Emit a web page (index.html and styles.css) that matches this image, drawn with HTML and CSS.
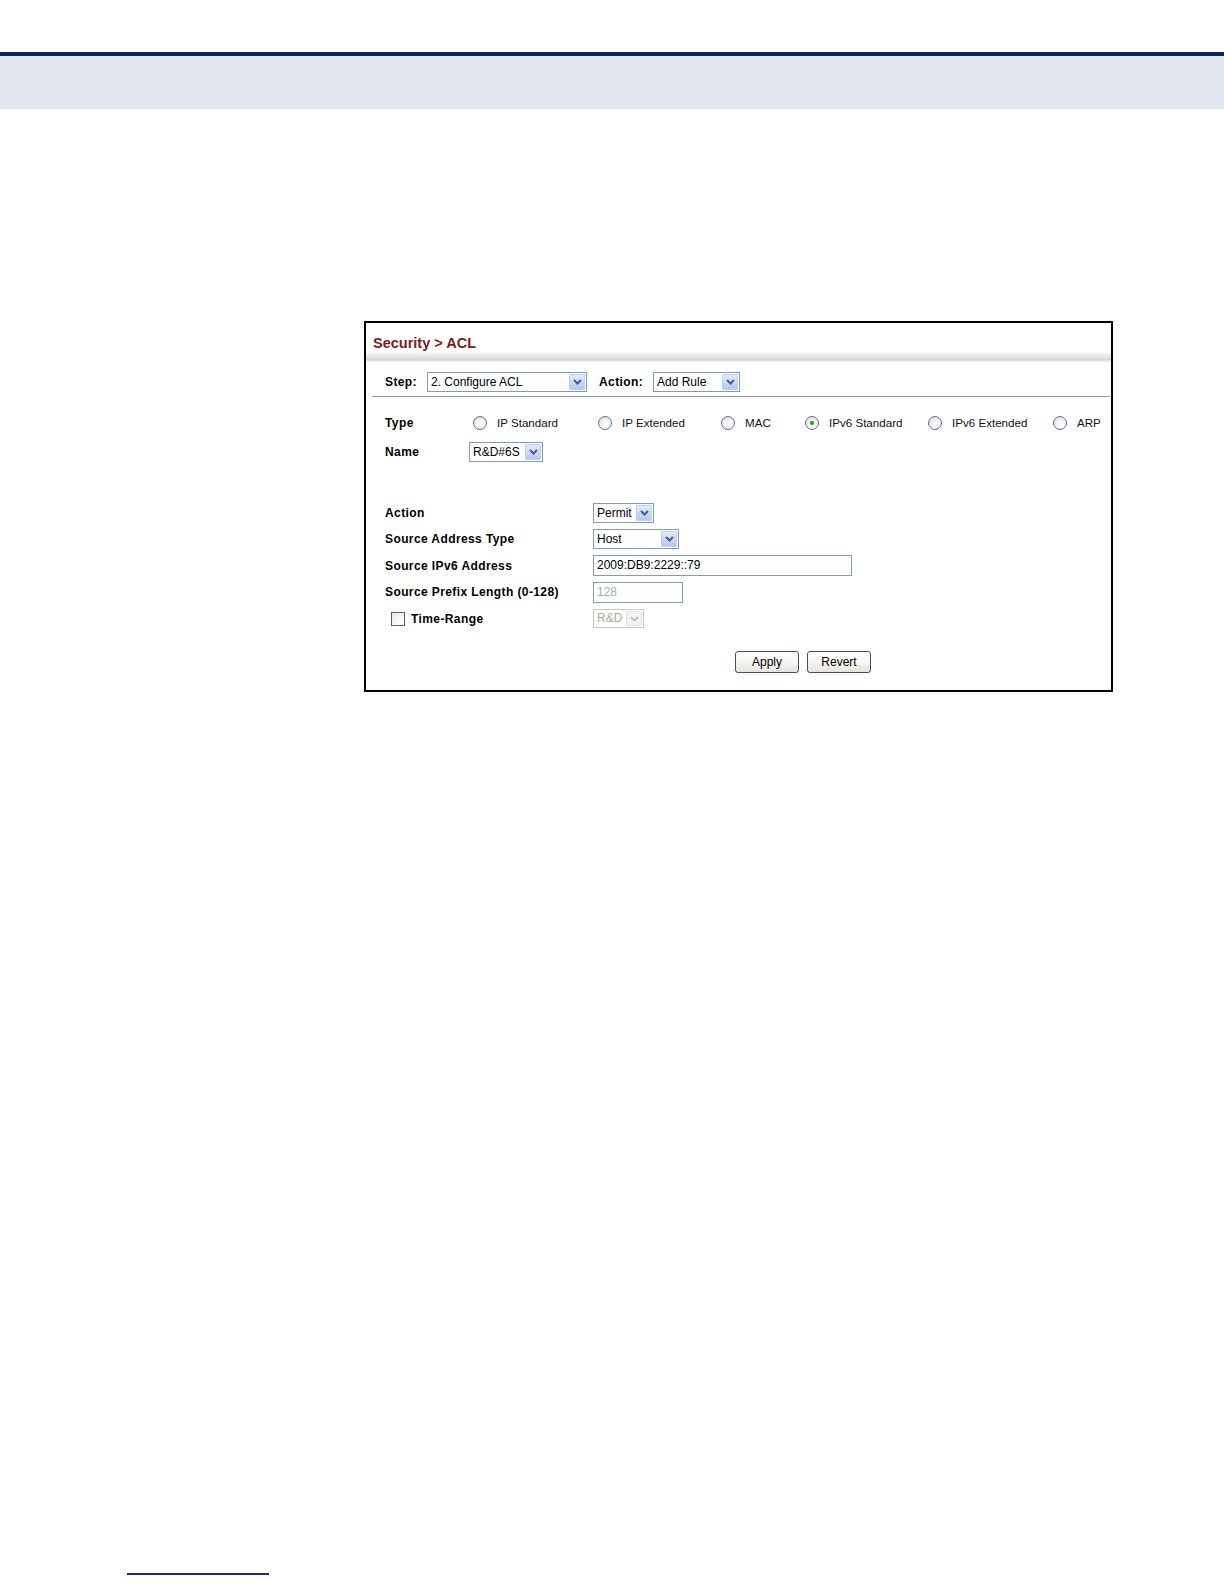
FILE: index.html
```html
<!DOCTYPE html>
<html>
<head>
<meta charset="utf-8">
<title>Security &gt; ACL</title>
<link rel="stylesheet" href="styles.css">
</head>
<body>
<div class="topline"></div>
<div class="band"></div>

<div class="panel">
  <div class="title">Security &gt; ACL</div>
  <div class="grad"></div>

  <div class="step-row">
    <span class="lbl step-lbl">Step:</span>
    <div class="sel w-step"><span class="sel-text">2. Configure ACL</span><span class="sel-btn"><svg width="9" height="6" viewBox="0 0 9 6"><path d="M1 1 L4.5 4.5 L8 1" fill="none" stroke="#4a5f86" stroke-width="2"/></svg></span></div>
    <span class="lbl act-lbl">Action:</span>
    <div class="sel w-act"><span class="sel-text">Add Rule</span><span class="sel-btn"><svg width="9" height="6" viewBox="0 0 9 6"><path d="M1 1 L4.5 4.5 L8 1" fill="none" stroke="#4a5f86" stroke-width="2"/></svg></span></div>
  </div>
  <div class="rule"></div>

  <div class="type-row">
    <span class="lbl type-lbl">Type</span>
    <label class="opt w1"><span class="radio"></span><span class="opt-text">IP Standard</span></label>
    <label class="opt w2"><span class="radio"></span><span class="opt-text">IP Extended</span></label>
    <label class="opt w3"><span class="radio"></span><span class="opt-text">MAC</span></label>
    <label class="opt w4"><span class="radio checked"></span><span class="opt-text">IPv6 Standard</span></label>
    <label class="opt w5"><span class="radio"></span><span class="opt-text">IPv6 Extended</span></label>
    <label class="opt"><span class="radio"></span><span class="opt-text">ARP</span></label>
  </div>

  <div class="name-row">
    <span class="lbl name-lbl">Name</span>
    <div class="sel w-name"><span class="sel-text">R&amp;D#6S</span><span class="sel-btn"><svg width="9" height="6" viewBox="0 0 9 6"><path d="M1 1 L4.5 4.5 L8 1" fill="none" stroke="#4a5f86" stroke-width="2"/></svg></span></div>
  </div>

  <div class="form-grid">
    <span class="lbl">Action</span>
    <div class="ctl"><div class="sel w-permit"><span class="sel-text">Permit</span><span class="sel-btn"><svg width="9" height="6" viewBox="0 0 9 6"><path d="M1 1 L4.5 4.5 L8 1" fill="none" stroke="#4a5f86" stroke-width="2"/></svg></span></div></div>

    <span class="lbl">Source Address Type</span>
    <div class="ctl"><div class="sel w-host"><span class="sel-text">Host</span><span class="sel-btn"><svg width="9" height="6" viewBox="0 0 9 6"><path d="M1 1 L4.5 4.5 L8 1" fill="none" stroke="#4a5f86" stroke-width="2"/></svg></span></div></div>

    <span class="lbl">Source IPv6 Address</span>
    <div class="ctl"><div class="inp w-ipv6">2009:DB9:2229::79</div></div>

    <span class="lbl">Source Prefix Length (0-128)</span>
    <div class="ctl"><div class="inp w-prefix disabled">128</div></div>

    <span class="lbl time-lbl"><span class="check"></span>Time-Range</span>
    <div class="ctl"><div class="sel w-rd dis"><span class="sel-text">R&amp;D</span><span class="sel-btn"><svg width="9" height="6" viewBox="0 0 9 6"><path d="M1 1 L4.5 4.5 L8 1" fill="none" stroke="#c4c4c4" stroke-width="2"/></svg></span></div></div>
  </div>

  <div class="buttons">
    <button class="btn">Apply</button>
    <button class="btn">Revert</button>
  </div>
</div>

<div class="footline"></div>
</body>
</html>
```
FILE: styles.css
```css
html, body {
  margin: 0;
  padding: 0;
  background: #ffffff;
  font-family: "Liberation Sans", Arial, sans-serif;
  color: #000;
}

.topline {
  margin-top: 52px;
  height: 4px;
  background: #0b2462;
}

.band {
  height: 53px;
  background: #e4e7ef;
}

.panel {
  margin-top: 212px;
  margin-left: 364px;
  width: 749px;
  box-sizing: border-box;
  border: 2px solid #000;
  padding-bottom: 17px;
}

.title {
  height: 29px;
  box-sizing: border-box;
  padding: 12px 0 0 7px;
  line-height: 17px;
  font-size: 14.5px;
  font-weight: bold;
  color: #7a1d1d;
}

.grad {
  height: 10px;
  background: linear-gradient(to bottom, #fbfbfb 0%, #e2e2e2 55%, #d9d9d9 75%, #f2f2f2 100%);
}

.lbl {
  font-size: 12px;
  font-weight: bold;
  letter-spacing: 0.4px;
  line-height: 20px;
  white-space: nowrap;
}

.step-row {
  display: flex;
  align-items: center;
  padding: 10px 0 4px 19px;
}

.step-lbl { width: 42px; }
.act-lbl { width: 54px; margin-left: 12px; }

.rule {
  margin-left: 6px;
  height: 1px;
  background: #9a9a9a;
}

.sel {
  height: 20px;
  box-sizing: border-box;
  border: 1px solid #7f9db9;
  background: #fff;
  display: flex;
  align-items: stretch;
  font-size: 12px;
}

.sel-text {
  flex: 1;
  padding-left: 3px;
  line-height: 18px;
  white-space: nowrap;
  overflow: hidden;
}

.sel-btn {
  width: 16px;
  margin: 1px;
  box-sizing: border-box;
  border: 1px solid #bdd0f4;
  border-radius: 1px;
  background: linear-gradient(to bottom, #e3ebfd 0%, #c5d6f8 60%, #b6c9f2 100%);
  display: flex;
  align-items: center;
  justify-content: center;
  flex: none;
}

.sel.dis {
  border-color: #c9c7ba;
  color: #aca899;
  height: 19px;
}
.sel.dis .sel-text { line-height: 17px; }
.sel.dis .sel-btn {
  background: #f4f4f0;
  border-color: #e0e0da;
}

.w-step { width: 160px; }
.w-act { width: 87px; }
.w-name { width: 74px; }
.w-permit { width: 61px; }
.w-host { width: 86px; }
.w-rd { width: 51px; }

.type-row {
  display: flex;
  align-items: center;
  margin-top: 16px;
  padding-left: 19px;
  height: 20px;
}

.type-lbl { width: 88px; }

.opt {
  display: flex;
  align-items: center;
  gap: 10px;
  font-size: 11.6px;
}
.w1 { width: 125px; }
.w2 { width: 123px; }
.w3 { width: 84px; }
.w4 { width: 123px; }
.w5 { width: 125px; }

.opt-text {
  line-height: 20px;
  color: #111;
}

.radio {
  width: 14px;
  height: 14px;
  box-sizing: border-box;
  border-radius: 50%;
  border: 1px solid #5f7189;
  background: radial-gradient(circle at 60% 65%, #ffffff 0%, #f2f2f2 45%, #d4d4d4 100%);
  display: flex;
  align-items: center;
  justify-content: center;
  flex: none;
}

.radio.checked::after {
  content: "";
  width: 4px;
  height: 4px;
  border-radius: 50%;
  background: #27a12a;
  box-shadow: 0 0 1px #5dc45f;
}

.name-row {
  display: flex;
  align-items: center;
  margin-top: 9px;
  padding-left: 19px;
  height: 20px;
}

.name-lbl { width: 84px; }

.form-grid {
  margin-top: 40px;
  padding-left: 19px;
  display: grid;
  grid-template-columns: 208px 1fr;
  grid-auto-rows: 21px;
  row-gap: 5.5px;
  align-items: center;
}

.ctl {
  display: flex;
  align-items: center;
}

.inp {
  height: 21px;
  box-sizing: border-box;
  border: 1px solid #7f9db9;
  font-size: 12px;
  line-height: 19px;
  padding-left: 3px;
  white-space: nowrap;
}

.inp.disabled { color: #ababab; }

.w-ipv6 { width: 259px; }
.w-prefix { width: 90px; }

.time-lbl {
  display: flex;
  align-items: center;
  padding-left: 6px;
}

.check {
  width: 14px;
  height: 14px;
  box-sizing: border-box;
  border: 1px solid #4f6178;
  background: linear-gradient(135deg, #e8e8e2 0%, #ffffff 80%);
  margin-right: 6px;
  flex: none;
}

.buttons {
  display: flex;
  gap: 8px;
  margin-top: 22px;
  padding-left: 369px;
}

.btn {
  width: 64px;
  height: 22px;
  box-sizing: border-box;
  border: 1px solid #3f5068;
  border-radius: 3px;
  background: linear-gradient(to bottom, #ffffff 0%, #f6f6f3 50%, #e4e3dc 100%);
  font-family: "Liberation Sans", Arial, sans-serif;
  font-size: 12px;
  color: #000;
  padding: 0;
  line-height: 20px;
}

.footline {
  margin-top: 881px;
  margin-left: 127px;
  width: 142px;
  height: 2px;
  background: #1f2390;
}
```
